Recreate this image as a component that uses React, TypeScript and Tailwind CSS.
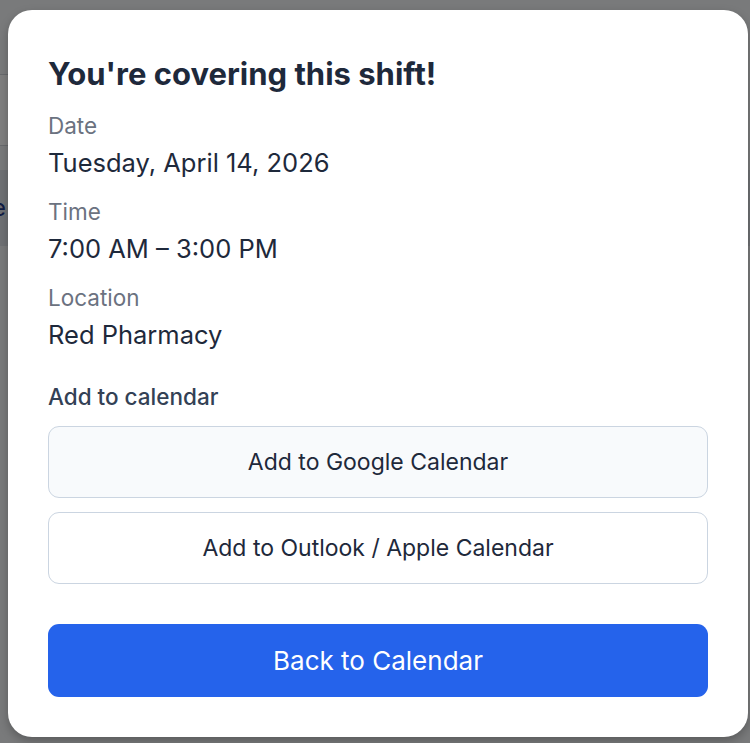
import React from "react";

function Field({ label, value }: { label: string; value: string }) {
  return (
    <div className="flex flex-col">
      <div className="text-[22.5px] leading-[28px] text-[#6b7280]">{label}</div>
      <div className="mt-[7px] text-[25.5px] leading-[32px] text-[#1e293b]">{value}</div>
    </div>
  );
}

export default function App() {
  return (
    <div
      className="relative h-[743px] w-[750px] overflow-hidden bg-[#f3f4f6]"
      style={{ fontFamily: "Inter, 'Noto Sans', sans-serif" }}
    >
      {/* underlying page */}
      <div className="flex flex-col gap-6 px-0 pt-[74px]">
        <div className="ml-[-20px] h-[72px] w-[40px] rounded-xl border border-[#d1d5db] bg-white" />
        <div className="flex h-[76px] items-center bg-[#dfe3e8] pl-0">
          <span className="ml-[-8px] text-[24px] text-[#1e3a8a]">e</span>
        </div>
      </div>

      {/* overlay */}
      <div className="absolute inset-0 bg-black/50 pl-[8px] pt-[10px]">
        <div className="flex h-[727px] w-[740px] flex-col rounded-[24px] bg-white px-[40px] pt-[40px] shadow-[0_4px_10px_rgba(0,0,0,0.25)]">
          <h1 className="text-[31px] font-bold leading-[48px] text-[#1e293b]">You're covering this shift!</h1>
          <div className="mt-[14px] flex flex-col gap-[19px]">
            <Field label="Date" value="Tuesday, April 14, 2026" />
            <Field label="Time" value="7:00 AM – 3:00 PM" />
            <Field label="Location" value="Red Pharmacy" />
          </div>
          <div className="mt-[32px] text-[22.5px] font-medium leading-[28px] text-[#334155]">Add to calendar</div>
          <div className="mt-[15px] flex flex-col gap-[14px]">
            <button className="flex h-[72px] w-full items-center justify-center rounded-[11px] border border-[#cbd5e1] bg-[#f8fafc] text-[23px] font-normal text-[#1e293b]">
              Add to Google Calendar
            </button>
            <button className="flex h-[72px] w-full items-center justify-center rounded-[11px] border border-[#cbd5e1] bg-white text-[23px] font-normal text-[#1e293b]">
              Add to Outlook / Apple Calendar
            </button>
          </div>
          <button className="mt-[40px] flex h-[73px] w-full items-center justify-center rounded-[11px] bg-[#2563eb] text-[26px] font-normal text-white">
            Back to Calendar
          </button>
        </div>
      </div>
    </div>
  );
}
